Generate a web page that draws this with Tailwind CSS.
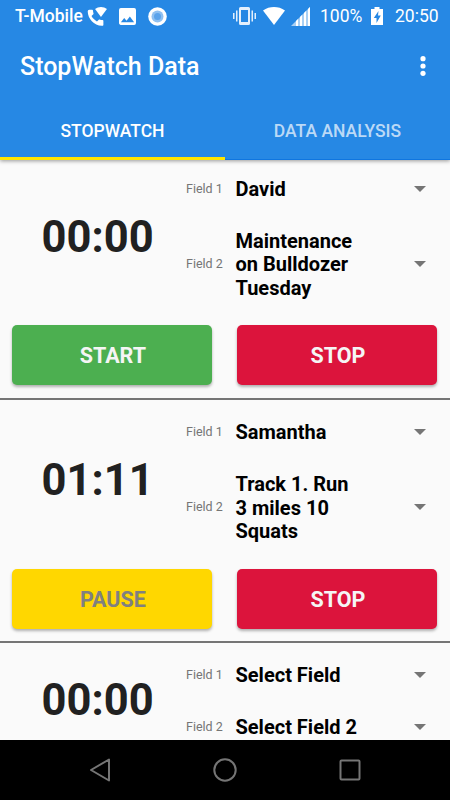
<!DOCTYPE html>
<html lang="en">
<head>
    <meta charset="UTF-8">
    <meta name="viewport" content="width=device-width, initial-scale=1.0">
    <title>StopWatch Data</title>
    <script src="https://cdn.jsdelivr.net/npm/@tailwindcss/browser@4"></script>
</head>
<body class="bg-black font-['Roboto',sans-serif]">
<div class="flex h-[800px] w-[450px] flex-col overflow-hidden bg-[#fafafa]">

    <!-- App bar -->
    <header class="relative z-10 flex h-40 shrink-0 flex-col bg-[#2688e4] text-white shadow-[0_1px_4px_rgba(0,0,0,0.4)]">
        <!-- Status bar -->
        <div class="flex h-8 items-center pr-[11px] pl-[15px] text-[17.5px]">
            <span class="w-[72px] font-medium whitespace-nowrap">T-Mobile</span>
            <svg class="h-[21px] w-[21px]" viewBox="0 0 20 20" fill="currentColor">
                <path d="M2.200 3.500h2.700c.4 0 .8.3.8.8 0 1 .2 1.900.5 2.800.1.3 0 .6-.2.8L4.300 9.600c1.200 2.200 3 4 5.200 5.100l1.700-1.700c.2-.2.500-.3.800-.2.900.3 1.800.5 2.800.5.400 0 .8.300.8.800v4c0 .400-.4.800-.8.800C7 19.300.700 12.100.700 5.300c0-1 .500-1.800 1.500-1.800z"></path>
                <path d="M13.300 10.500 7.700 2.900C10.700.200 15.900.200 19 2.900z"></path>
            </svg>
            <svg class="ml-[11px] h-[17px] w-[17px]" viewBox="0 0 18 18" fill="currentColor">
                <path d="M18 16V2a2 2 0 0 0-2-2H2a2 2 0 0 0-2 2v14c0 1.100.900 2 2 2h14a2 2 0 0 0 2-2zM5.500 10.500 8 13.510 11.500 9l4.500 6H2z" fill-rule="evenodd"></path>
            </svg>
            <svg class="ml-3 h-[19px] w-[19px]" viewBox="0 0 19 19">
                <circle cx="9.500" cy="9.500" r="9.300" fill="#fff"></circle>
                <circle cx="9.500" cy="9.500" r="6" fill="#8fc0f1"></circle>
                <circle cx="9.500" cy="9.500" r="3.500" fill="#5ba3eb"></circle>
            </svg>
            <div class="ml-auto flex items-center">
                <svg class="h-[18px] w-[23px]" viewBox="0 0 23 18" fill="#e3effc">
                    <path d="M0 6h1.500v6H0zM3 3.500h1.500v11H3zM21.500 6H23v6h-1.500zM18.500 3.500H20v11h-1.500zM7.500 0h8A1.500 1.500 0 0 1 17 1.500v15a1.500 1.500 0 0 1-1.500 1.500h-8A1.500 1.500 0 0 1 6 16.500v-15A1.500 1.500 0 0 1 7.500 0zM8 3v12h7V3z" fill-rule="evenodd"></path>
                </svg>
                <svg class="ml-[7px] h-[18px] w-[22px]" viewBox="0 0 22 18" fill="currentColor">
                    <path d="M11 18 0 3.500C6.500-1.100 15.500-1.100 22 3.500z"></path>
                </svg>
                <svg class="ml-[6px] h-[19px] w-[19px]" viewBox="0 0 19 19" fill="currentColor">
                    <path d="M0 19 19 0v19z" opacity=".6"></path>
                    <path d="M5 14l2-2v7H5zM9 10l2-2v11H9zM13 6l2-2v15h-2zM17 2l2-2v19h-2z"></path>
                </svg>
                <span class="ml-[10px] w-[44px] whitespace-nowrap">100%</span>
                <svg class="ml-[7px] h-[18px] w-3" viewBox="0 0 12 18" fill="currentColor">
                    <path d="M3.500 0h5v2H12v16H0V2h3.500zM7.500 4 2.800 11H5.500v5L9.800 8.500H7z" fill-rule="evenodd"></path>
                </svg>
                <span class="ml-[12px] w-[44px] whitespace-nowrap">20:50</span>
            </div>
        </div>
        <!-- Title -->
        <div class="flex h-[70px] items-center justify-between pr-[24.500px] pl-5">
            <h1 class="text-[25px] font-medium">StopWatch Data</h1>
            <svg class="-mt-[2px] h-5 w-[6px]" viewBox="0 0 6 20" fill="currentColor">
                <circle cx="3" cy="2.700" r="2.600"></circle>
                <circle cx="3" cy="10" r="2.600"></circle>
                <circle cx="3" cy="17.300" r="2.600"></circle>
            </svg>
        </div>
        <!-- Tabs -->
        <nav class="grid grow grid-cols-2 text-center text-[17.5px] font-medium">
            <a class="flex items-center justify-center border-b-[3px] border-[#ffe500] pt-[4px]">STOPWATCH</a>
            <a class="flex items-center justify-center border-b border-[#0f76e0] pt-[2px] text-white/70">DATA ANALYSIS</a>
        </nav>
    </header>

    <main class="-mt-[3px] h-[583px] shrink-0 overflow-hidden">
        <section class="h-[243.200px] border-b-[2px] border-[#757575] pt-[6px]">
            <div class="flex">
                <div class="flex w-[186px] items-center pl-[41.500px] text-[43.500px] font-bold text-[#212121]">00:00</div>
                <div class="grow text-xl/[23.440px] font-bold text-black">
                    <div class="flex items-center py-[13px]">
                        <span class="w-[49.500px] text-[12.500px] font-normal text-[#757575]">Field 1</span>
                        <span class="w-[122px] pt-[2px]">David</span>
                        <svg class="ml-[56px] h-[6px] w-3" viewBox="0 0 12 6" fill="#757575"><path d="M0 0h12L6 6z"></path></svg>
                    </div>
                    <div class="flex items-center py-[12.500px]">
                        <span class="w-[49.500px] text-[12.500px] font-normal text-[#757575]">Field 2</span>
                        <span class="w-[122px] pt-[3px]">Maintenance on Bulldozer Tuesday</span>
                        <svg class="ml-[56px] h-[6px] w-3" viewBox="0 0 12 6" fill="#757575"><path d="M0 0h12L6 6z"></path></svg>
                    </div>
                </div>
            </div>
            <div class="mt-[12.700px] grid grid-cols-2 gap-[25px] pr-[12.600px] pl-[12.400px] text-[21.500px] font-bold text-[#f5f5f5]">
                <button class="h-[60px] rounded-[5px] bg-[#4caf50] pt-[2px] pl-px shadow-[0_2px_3px_rgba(0,0,0,0.3)]">START</button>
                <button class="h-[60px] rounded-[5px] bg-[#dc143c] pt-[2px] pl-px shadow-[0_2px_3px_rgba(0,0,0,0.3)]">STOP</button>
            </div>
        </section>

        <section class="h-[243.200px] border-b-[2px] border-[#757575] pt-[6px]">
            <div class="flex">
                <div class="flex w-[186px] items-center pl-[41.500px] text-[43.500px] font-bold text-[#212121]">01:11</div>
                <div class="grow text-xl/[23.440px] font-bold text-black">
                    <div class="flex items-center py-[13px]">
                        <span class="w-[49.500px] text-[12.500px] font-normal text-[#757575]">Field 1</span>
                        <span class="w-[122px] pt-[2px]">Samantha</span>
                        <svg class="ml-[56px] h-[6px] w-3" viewBox="0 0 12 6" fill="#757575"><path d="M0 0h12L6 6z"></path></svg>
                    </div>
                    <div class="flex items-center py-[12.500px]">
                        <span class="w-[49.500px] text-[12.500px] font-normal text-[#757575]">Field 2</span>
                        <span class="w-[122px] pt-[3px]">Track 1. Run 3 miles 10 Squats</span>
                        <svg class="ml-[56px] h-[6px] w-3" viewBox="0 0 12 6" fill="#757575"><path d="M0 0h12L6 6z"></path></svg>
                    </div>
                </div>
            </div>
            <div class="mt-[12.700px] grid grid-cols-2 gap-[25px] pr-[12.600px] pl-[12.400px] text-[21.500px] font-bold text-[#f5f5f5]">
                <button class="h-[60px] rounded-[5px] bg-[#ffd700] pt-[2px] pl-px text-[#808080] shadow-[0_2px_3px_rgba(0,0,0,0.3)]">PAUSE</button>
                <button class="h-[60px] rounded-[5px] bg-[#dc143c] pt-[2px] pl-px shadow-[0_2px_3px_rgba(0,0,0,0.3)]">STOP</button>
            </div>
        </section>

        <section class="pt-[6px]">
            <div class="flex">
                <div class="flex w-[186px] items-center pl-[41.500px] text-[43.500px] font-bold text-[#212121]">00:00</div>
                <div class="grow text-xl/[23.440px] font-bold text-black">
                    <div class="flex items-center py-[13px]">
                        <span class="w-[49.500px] text-[12.500px] font-normal text-[#757575]">Field 1</span>
                        <span class="w-[122px] pt-[2px] whitespace-nowrap">Select Field</span>
                        <svg class="ml-[56px] h-[6px] w-3" viewBox="0 0 12 6" fill="#757575"><path d="M0 0h12L6 6z"></path></svg>
                    </div>
                    <div class="flex items-center py-[12.500px]">
                        <span class="w-[49.500px] text-[12.500px] font-normal text-[#757575]">Field 2</span>
                        <span class="w-[122px] pt-[3px] whitespace-nowrap">Select Field 2</span>
                        <svg class="ml-[56px] h-[6px] w-3" viewBox="0 0 12 6" fill="#757575"><path d="M0 0h12L6 6z"></path></svg>
                    </div>
                </div>
            </div>
        </section>
    </main>

    <!-- Navigation bar -->
    <footer class="flex h-[60px] shrink-0 items-center justify-center gap-[101px] bg-black">
        <svg class="h-6 w-6" viewBox="0 0 24 24" fill="none" stroke="#757575" stroke-width="2" stroke-linejoin="round"><path d="M3 12 21 1.500v21z"></path></svg>
        <svg class="h-6 w-6" viewBox="0 0 24 24" fill="none" stroke="#757575" stroke-width="2"><circle cx="12" cy="12" r="10.700"></circle></svg>
        <svg class="h-6 w-6" viewBox="0 0 24 24" fill="none" stroke="#757575" stroke-width="2"><rect x="2.500" y="2.500" width="19" height="19" rx="1"></rect></svg>
    </footer>
</div>
</body>
</html>
